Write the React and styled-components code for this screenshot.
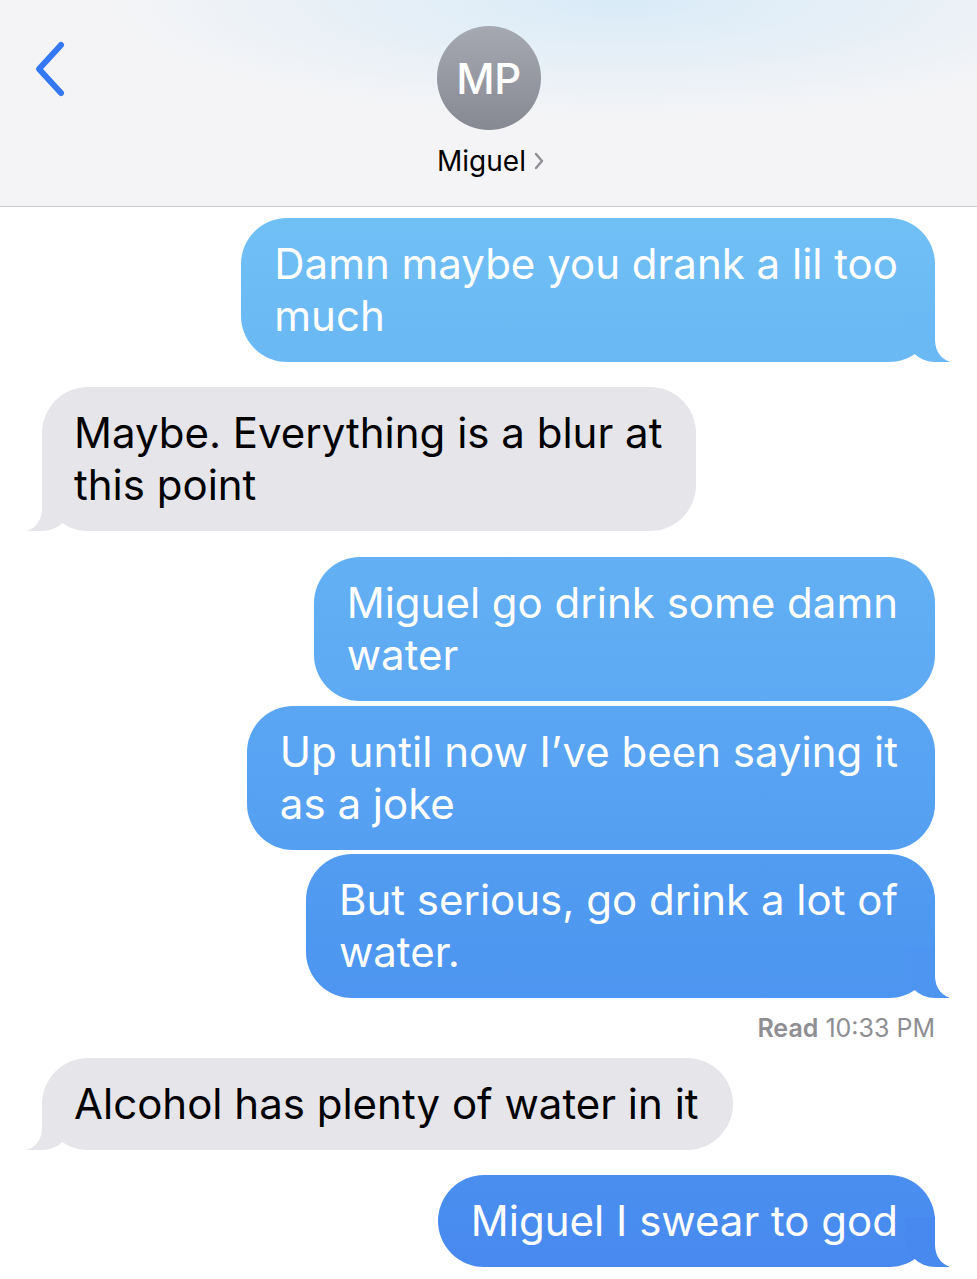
import React from 'react';
import styled, { createGlobalStyle } from 'styled-components';

const GlobalStyle = createGlobalStyle`
  html, body {
    margin: 0;
    padding: 0;
    background: #ffffff;
  }
  body {
    font-family: Inter, "Noto Sans", "Liberation Sans", sans-serif;
    -webkit-font-smoothing: antialiased;
  }
`;

const Screen = styled.div`
  width: 977px;
  min-height: 1279px;
  background: #ffffff;
  overflow: hidden;
`;

const Header = styled.header`
  height: 206px;
  border-bottom: 1px solid #c9c9ce;
  background:
    radial-gradient(ellipse 520px 120px at 620px 0px, rgba(214, 234, 248, 0.9), rgba(214, 234, 248, 0) 100%),
    #f4f4f6;
  display: grid;
  grid-template-columns: 120px 1fr 120px;
  align-items: start;
`;

const BackButton = styled.div`
  padding: 40px 0 0 33px;
  svg {
    display: block;
  }
`;

const Contact = styled.div`
  display: flex;
  flex-direction: column;
  align-items: center;
  padding-top: 26px;
  row-gap: 14px;
`;

const Avatar = styled.div`
  width: 104px;
  height: 104px;
  border-radius: 50%;
  background: linear-gradient(180deg, #a6a9b1 0%, #868992 100%);
  color: #ffffff;
  font-size: 42px;
  font-weight: 500;
  display: flex;
  align-items: center;
  justify-content: center;
  letter-spacing: -0.5px;
`;

const Name = styled.div`
  display: flex;
  align-items: center;
  column-gap: 8px;
  font-size: 28px;
  line-height: 34px;
  color: #000000;
  margin-left: 4px;
  svg {
    display: block;
  }
`;

const Thread = styled.div`
  display: flex;
  flex-direction: column;
  padding: 11px 42px 0 42px;
`;

const Bubble = styled.div`
  position: relative;
  align-self: ${p => (p.$me ? 'flex-end' : 'flex-start')};
  margin-top: ${p => p.$gap}px;
  padding: ${p => (p.$me ? '20px 37px 20px 33px' : '20px 34px 20px 32px')};
  border-radius: 46px;
  font-size: 42px;
  line-height: 52px;
  white-space: pre;
  color: ${p => (p.$me ? '#ffffff' : '#000000')};
  background: ${p => (p.$me ? `linear-gradient(180deg, ${p.$top}, ${p.$bottom})` : '#e5e5ea')};

  &::before {
    content: "";
    display: ${p => (p.$tail ? 'block' : 'none')};
    position: absolute;
    bottom: 0;
    ${p => (p.$me ? 'right: -14px;' : 'left: -14px;')}
    width: 44px;
    height: 50px;
    background: ${p => (p.$me ? p.$bottom : '#e5e5ea')};
    ${p => (p.$me ? 'border-bottom-left-radius: 30px 30px;' : 'border-bottom-right-radius: 30px 30px;')}
    z-index: 0;
  }

  &::after {
    content: "";
    display: ${p => (p.$tail ? 'block' : 'none')};
    position: absolute;
    bottom: 0;
    ${p => (p.$me ? 'right: -22px;' : 'left: -22px;')}
    width: 22px;
    height: 52px;
    background: #ffffff;
    ${p => (p.$me ? 'border-bottom-left-radius: 18px 22px;' : 'border-bottom-right-radius: 18px 22px;')}
    z-index: 1;
  }
`;

const BubbleText = styled.span`
  position: relative;
  z-index: 2;
`;

const Receipt = styled.div`
  align-self: flex-end;
  margin-top: 15px;
  font-size: 25px;
  line-height: 30px;
  color: #8e8e93;
  b {
    font-weight: 600;
  }
`;

const messages = [
  { me: true, gap: 0, tail: true, top: '#70bff5', bottom: '#6ab8f4', text: 'Damn maybe you drank a lil too\nmuch' },
  { me: false, gap: 25, tail: true, text: 'Maybe. Everything is a blur at\nthis point' },
  { me: true, gap: 26, tail: false, top: '#63b0f4', bottom: '#5ea9f3', text: 'Miguel go drink some damn\nwater' },
  { me: true, gap: 5, tail: false, top: '#5aa6f3', bottom: '#559ff2', text: 'Up until now I\u2019ve been saying it\nas a joke' },
  { me: true, gap: 4, tail: true, top: '#529cf1', bottom: '#4d95f0', text: 'But serious, go drink a lot of\nwater.' },
  { receipt: true },
  { me: false, gap: 15, tail: true, text: 'Alcohol has plenty of water in it' },
  { me: true, gap: 25, tail: true, top: '#4a8ff0', bottom: '#4889ef', text: 'Miguel I swear to god' },
];

const App = () => {
  return (
    <Screen>
      <GlobalStyle />
      <Header>
        <BackButton>
          <svg width="34" height="58" viewBox="0 0 34 58">
            <path d="M28 5 L6 29 L28 53" fill="none" stroke="#3478f6" strokeWidth="6" strokeLinecap="round" strokeLinejoin="round" />
          </svg>
        </BackButton>
        <Contact>
          <Avatar>MP</Avatar>
          <Name>
            Miguel
            <svg width="10" height="18" viewBox="0 0 10 18">
              <path d="M2 2 L8 9 L2 16" fill="none" stroke="#8e8e93" strokeWidth="2.4" strokeLinecap="round" strokeLinejoin="round" />
            </svg>
          </Name>
        </Contact>
        <div />
      </Header>
      <Thread>
        {messages.map((m, i) =>
          m.receipt ? (
            <Receipt key={i}>
              <b>Read</b> 10:33 PM
            </Receipt>
          ) : (
            <Bubble key={i} $me={m.me} $gap={m.gap} $tail={m.tail} $top={m.top} $bottom={m.bottom}>
              <BubbleText>{m.text}</BubbleText>
            </Bubble>
          )
        )}
      </Thread>
    </Screen>
  );
};

export default App;
